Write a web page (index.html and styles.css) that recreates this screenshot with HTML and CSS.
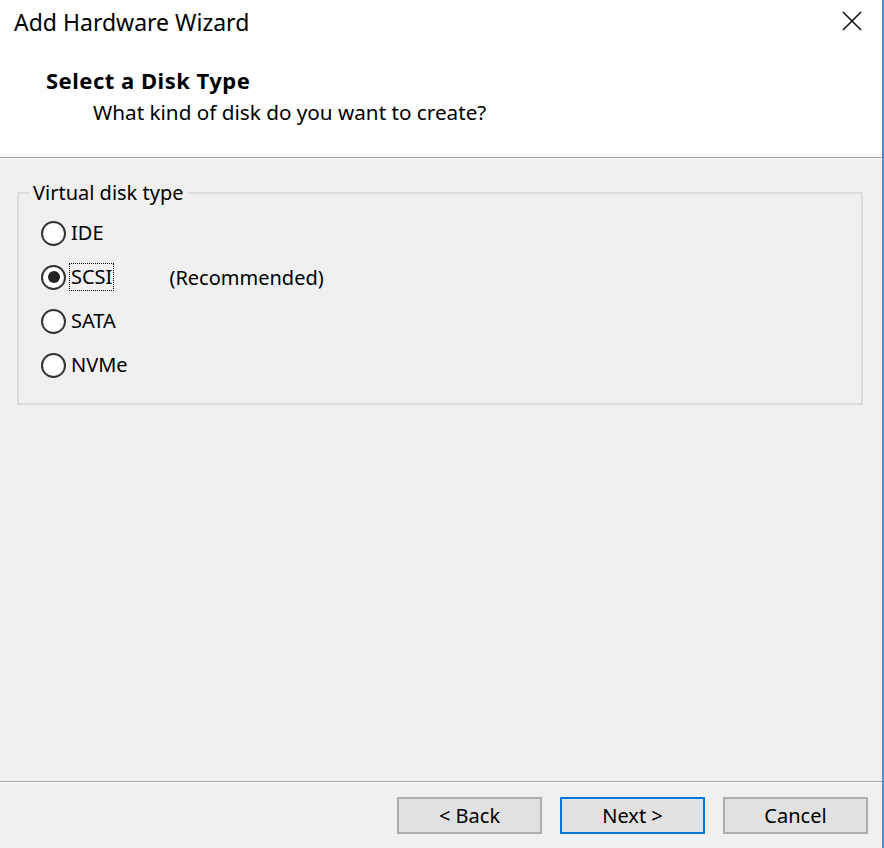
FILE: index.html
```html
<!DOCTYPE html>
<html>
<head>
<meta charset="utf-8">
<link rel="stylesheet" href="styles.css">
</head>
<body>
<div class="dialog">
  <div class="top">
    <div class="titlebar">
      <span class="title">Add Hardware Wizard</span>
      <svg class="close" width="20" height="20" viewBox="0 0 20 20"><path d="M1 1 L19 19 M19 1 L1 19" stroke="#111" stroke-width="1.6" fill="none"/></svg>
    </div>
    <div class="header">
      <div class="h-title">Select a Disk Type</div>
      <div class="h-sub">What kind of disk do you want to create?</div>
    </div>
  </div>
  <div class="sep"></div>
  <div class="body">
    <fieldset class="group">
      <legend>Virtual disk type</legend>
      <div class="radio"><span class="circle"></span><span class="lbl">IDE</span></div>
      <div class="radio"><span class="circle checked"></span><span class="lbl focus">SCSI</span><span class="rec">(Recommended)</span></div>
      <div class="radio"><span class="circle"></span><span class="lbl">SATA</span></div>
      <div class="radio"><span class="circle"></span><span class="lbl">NVMe</span></div>
    </fieldset>
  </div>
  <div class="sep"></div>
  <div class="footer">
    <button class="btn">&lt; Back</button>
    <button class="btn default">Next &gt;</button>
    <button class="btn">Cancel</button>
  </div>
</div>
</body>
</html>
```
FILE: styles.css
```css
html, body { margin: 0; padding: 0; }
body {
  width: 884px; height: 848px; overflow: hidden;
  font-family: "Noto Sans", "Open Sans", sans-serif;
  color: #000;
  background: #f0f0f0;
}
.dialog {
  box-sizing: border-box;
  width: 884px; height: 848px;
  border-right: 2px solid #4a8ed8;
  display: flex; flex-direction: column;
  background: #f0f0f0;
}
.top { background: #fff; height: 157px; display: flex; flex-direction: column; }
.titlebar {
  display: flex; justify-content: space-between; align-items: center;
  height: 44px; padding: 0 20px 0 14px;
}
.title { font-size: 23px; }
.close { margin-top: -2px; }
.header { padding: 22px 0 0 46px; }
.h-title { font-size: 22px; font-weight: bold; line-height: 28px; letter-spacing: 0.5px; }
.h-sub { font-size: 20.7px; line-height: 28px; padding-left: 47px; margin-top: 4px; }
.sep { height: 1px; background: #a0a0a0; border-bottom: 1px solid #fff; }
.body { flex: 1; padding: 21px 19px 0 17px; }
.group {
  margin: 0; padding: 5px 0 0 22px;
  border: 2px solid #dcdcdc;
  height: 225px; box-sizing: border-box;
}
.group legend {
  font-size: 20px; padding: 0 4px; margin-left: -12px;
  line-height: 26px;
}
.radio { display: flex; align-items: center; height: 44px; font-size: 20px; }
.circle {
  width: 21px; height: 21px; border: 2px solid #333; border-radius: 50%;
  background: #fff; box-sizing: content-box; position: relative; margin-right: 4px;
}
.circle.checked::after {
  content: ""; position: absolute; left: 4.5px; top: 4.5px;
  width: 12px; height: 12px; border-radius: 50%; background: #222;
}
.lbl { line-height: 26px; padding: 0 1px; }
.lbl.focus { outline: 1px dotted #000; outline-offset: 0; }
.rec { margin-left: 56px; }
.footer {
  height: 65px; display: flex; justify-content: flex-end; align-items: center;
  gap: 18px; padding-right: 14px; box-sizing: border-box;
}
.btn {
  width: 145px; height: 37px; box-sizing: border-box;
  background: #e1e1e1; border: 2px solid #adadad;
  font-family: inherit; font-size: 20px; color: #000; padding: 0;
}
.btn.default { border: 2px solid #0078d7; }
```
